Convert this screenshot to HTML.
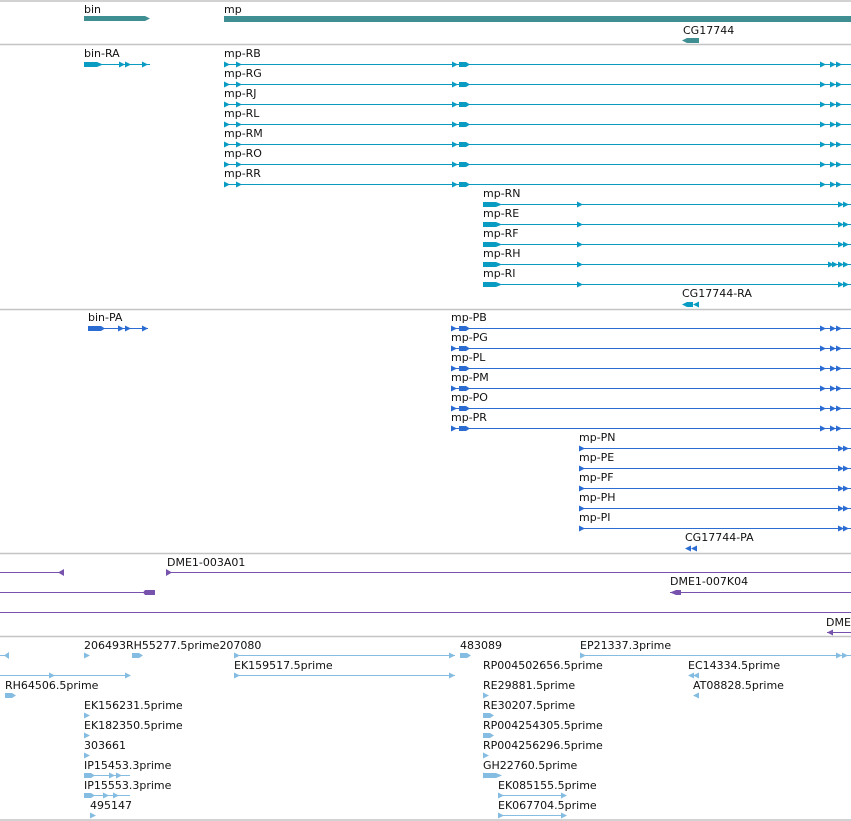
<!DOCTYPE html>
<html><head><meta charset="utf-8"><style>
html,body{margin:0;padding:0;background:#fff;width:851px;height:821px;overflow:hidden}
svg{display:block}
text{font-family:"DejaVu Sans","Liberation Sans",sans-serif;font-size:11px;fill:#111}
</style></head><body>
<svg width="851" height="821" viewBox="0 0 851 821" xmlns="http://www.w3.org/2000/svg">
<defs>
<path id="r" d="M0,-3L6,0L0,3z"/>
<path id="l" d="M6,-3L0,0L6,3z"/>
<path id="bx" d="M0,-2.5H13L19,0L13,2.5H0z"/>
<path id="bs" d="M0,-2.5H7L11,0L7,2.5H0z"/>
</defs>
<g fill="none" stroke="#c4c4c4" stroke-width="1.5">
<path d="M0,1H851M0,44.5H851M0,309.5H851M0,553.5H851M0,636.5H851M0,820H851"/>
</g>
<!-- genes -->
<text x="84" y="13">bin</text><text x="224" y="13">mp</text>
<path d="M84,16H145L150,18.5L145,21H84z" fill="#3e8e92"/>
<rect x="224" y="16" width="627" height="6" fill="#3e8e92"/>
<text x="683" y="34">CG17744</text>
<path d="M682,40.5L687,38H699V43H687z" fill="#3e8e92"/>
<!-- transcripts -->
<g fill="#0a9bc2">
<text x="84" y="57">bin-RA</text>
<path d="M84,64.5H150" stroke="#0a9bc2"/>
<use href="#bx" x="84" y="64.5"/><use href="#r" x="119" y="64.5"/><use href="#r" x="125" y="64.5"/><use href="#r" x="142" y="64.5"/>
</g>
<g id="trow" fill="#0a9bc2">
<path d="M224,64.5H851" stroke="#0a9bc2"/>
<use href="#r" x="224" y="64.5"/><use href="#r" x="236" y="64.5"/><use href="#r" x="452" y="64.5"/><use href="#bs" x="459" y="64.5"/>
<use href="#r" x="820" y="64.5"/><use href="#r" x="830" y="64.5"/><use href="#r" x="836" y="64.5"/>
</g>
<use href="#trow" y="20"/><use href="#trow" y="40"/><use href="#trow" y="60"/><use href="#trow" y="80"/><use href="#trow" y="100"/><use href="#trow" y="120"/>
<text x="224" y="57">mp-RB</text><text x="224" y="77">mp-RG</text><text x="224" y="97">mp-RJ</text><text x="224" y="117">mp-RL</text><text x="224" y="137">mp-RM</text><text x="224" y="157">mp-RO</text><text x="224" y="177">mp-RR</text>
<g id="trow2" fill="#0a9bc2">
<path d="M483,204.5H851" stroke="#0a9bc2"/>
<use href="#bx" x="483" y="204.5"/><use href="#r" x="577" y="204.5"/><use href="#r" x="838" y="204.5"/><use href="#r" x="843" y="204.5"/>
</g>
<use href="#trow2" y="20"/><use href="#trow2" y="40"/><use href="#trow2" y="60"/><use href="#trow2" y="80"/>
<use href="#r" x="828" y="264.5" fill="#0a9bc2"/><use href="#r" x="832" y="264.5" fill="#0a9bc2"/>
<text x="483" y="197">mp-RN</text><text x="483" y="217">mp-RE</text><text x="483" y="237">mp-RF</text><text x="483" y="257">mp-RH</text><text x="483" y="277">mp-RI</text>
<text x="682" y="297">CG17744-RA</text>
<g fill="#0a9bc2"><path d="M682,304.5L687,302H693V307H687z"/><use href="#l" x="693" y="304.5"/></g>
<!-- proteins -->
<g fill="#2a6cd2">
<text x="88" y="321">bin-PA</text>
<path d="M88,328.5H148" stroke="#2a6cd2"/>
<path d="M88,326H101L105,328.5L101,331H88z"/><use href="#r" x="118" y="328.5"/><use href="#r" x="125" y="328.5"/><use href="#r" x="142" y="328.5"/>
</g>
<g id="prow" fill="#2a6cd2">
<path d="M451,328.5H851" stroke="#2a6cd2"/>
<use href="#r" x="451" y="328.5"/><use href="#bs" x="459" y="328.5"/>
<use href="#r" x="820" y="328.5"/><use href="#r" x="830" y="328.5"/><use href="#r" x="836" y="328.5"/>
</g>
<use href="#prow" y="20"/><use href="#prow" y="40"/><use href="#prow" y="60"/><use href="#prow" y="80"/><use href="#prow" y="100"/>
<text x="451" y="321">mp-PB</text><text x="451" y="341">mp-PG</text><text x="451" y="361">mp-PL</text><text x="451" y="381">mp-PM</text><text x="451" y="401">mp-PO</text><text x="451" y="421">mp-PR</text>
<g id="prow2" fill="#2a6cd2">
<path d="M579,448.5H851" stroke="#2a6cd2"/>
<use href="#r" x="579" y="448.5"/><use href="#r" x="838" y="448.5"/><use href="#r" x="843" y="448.5"/>
</g>
<use href="#prow2" y="20"/><use href="#prow2" y="40"/><use href="#prow2" y="60"/><use href="#prow2" y="80"/>
<text x="579" y="441">mp-PN</text><text x="579" y="461">mp-PE</text><text x="579" y="481">mp-PF</text><text x="579" y="501">mp-PH</text><text x="579" y="521">mp-PI</text>
<text x="685" y="541">CG17744-PA</text>
<g fill="#2a6cd2"><use href="#l" x="685" y="548.5"/><use href="#l" x="691" y="548.5"/></g>
<!-- purple -->
<g fill="#7753ad" stroke="#7753ad">
<path d="M0,572.5H62M166,572.5H851M0,592.5H150M670,592.5H851M0,612.5H851M827,632.5H851" fill="none"/>
<path d="M64,569V576L58,572.5z" stroke="none"/>
<path d="M166,569V576L172,572.5z" stroke="none"/>
<path d="M145,590H155V595H145L143,592.5z" stroke="none"/>
<path d="M670,592.5L676,590H681V595H676z" stroke="none"/>
<path d="M827,632.5L833,629.5V635.5z" stroke="none"/>
</g>
<text x="167" y="566">DME1-003A01</text>
<text x="670" y="585">DME1-007K04</text>
<text x="826" y="626">DME1</text>
<!-- ESTs -->
<g fill="#85bce2" stroke="#85bce2">
<path d="M0,655.5H8M234,655.5H455M580,655.5H851M0,675.5H130M234,675.5H455M498,795.5H565M498,815.5H565M84,775.5H130M84,795.5H130" fill="none"/>
</g>
<g fill="#85bce2">
<path d="M9,652V659L4,655.5z"/>
<use href="#r" x="84" y="655.5"/><use href="#bs" x="132" y="655.5"/>
<use href="#r" x="234" y="655.5"/><use href="#r" x="449" y="655.5"/><use href="#bs" x="460" y="655.5"/>
<use href="#r" x="580" y="655.5"/><use href="#r" x="836" y="655.5"/><use href="#r" x="842" y="655.5"/>
<use href="#r" x="49" y="675.5"/><use href="#r" x="125" y="675.5"/>
<use href="#r" x="234" y="675.5"/><use href="#r" x="449" y="675.5"/>
<use href="#l" x="688" y="675.5"/><use href="#l" x="693" y="675.5"/>
<use href="#bs" x="5" y="695.5"/><use href="#r" x="483" y="695.5"/><use href="#l" x="693" y="695.5"/>
<use href="#bs" x="483" y="715.5"/><use href="#r" x="84" y="715.5"/>
<use href="#bs" x="483" y="735.5"/><use href="#r" x="84" y="735.5"/>
<use href="#r" x="483" y="755.5"/><use href="#r" x="84" y="755.5"/>
<use href="#r" x="483" y="775.5"/><use href="#bs" x="84" y="775.5"/><use href="#r" x="109" y="775.5"/><use href="#r" x="116" y="775.5"/>
<use href="#bx" x="483" y="775.5"/>
<use href="#bs" x="84" y="795.5"/><use href="#r" x="103" y="795.5"/><use href="#r" x="113" y="795.5"/>
<use href="#r" x="498" y="795.5"/><use href="#r" x="561" y="795.5"/>
<use href="#r" x="90" y="815.5"/><use href="#r" x="498" y="815.5"/><use href="#r" x="561" y="815.5"/>
</g>
<text x="84" y="649">206493RH55277.5prime207080</text>
<text x="460" y="649">483089</text>
<text x="580" y="649">EP21337.3prime</text>
<text x="234" y="669">EK159517.5prime</text>
<text x="483" y="669">RP004502656.5prime</text>
<text x="688" y="669">EC14334.5prime</text>
<text x="5" y="689">RH64506.5prime</text>
<text x="483" y="689">RE29881.5prime</text>
<text x="693" y="689">AT08828.5prime</text>
<text x="84" y="709">EK156231.5prime</text><text x="483" y="709">RE30207.5prime</text>
<text x="84" y="729">EK182350.5prime</text><text x="483" y="729">RP004254305.5prime</text>
<text x="84" y="749">303661</text><text x="483" y="749">RP004256296.5prime</text>
<text x="84" y="769">IP15453.3prime</text><text x="483" y="769">GH22760.5prime</text>
<text x="84" y="789">IP15553.3prime</text><text x="498" y="789">EK085155.5prime</text>
<text x="90" y="809">495147</text><text x="498" y="809">EK067704.5prime</text>
</svg>
</body></html>
